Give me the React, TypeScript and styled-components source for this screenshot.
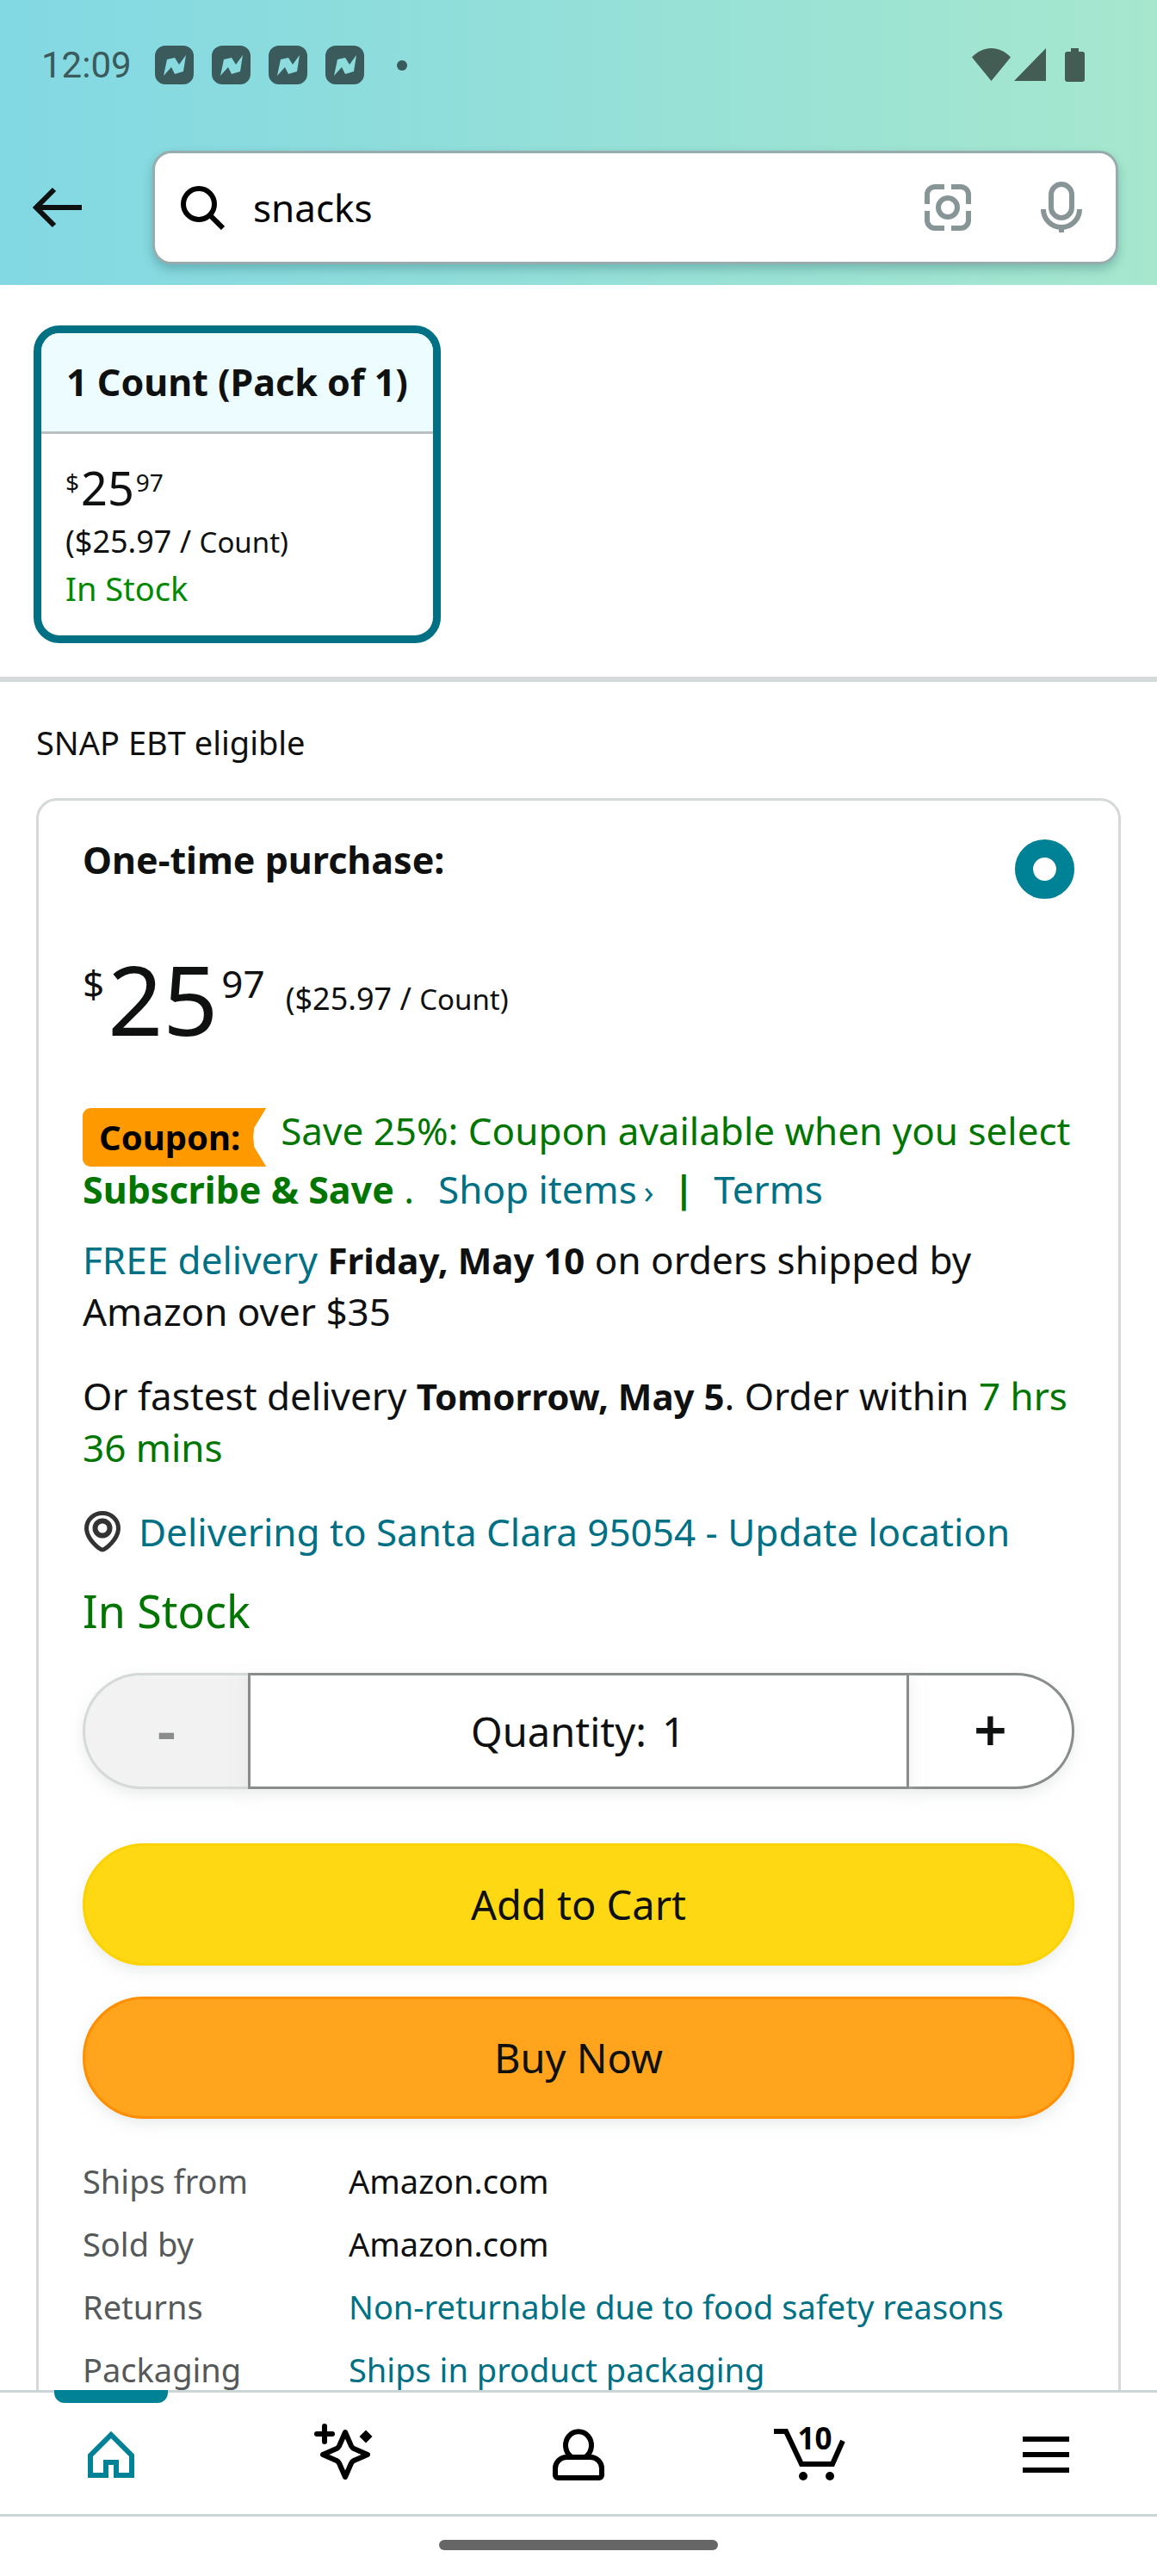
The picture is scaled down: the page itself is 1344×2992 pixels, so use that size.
import React, { useState } from 'react';
import styled, { createGlobalStyle, css } from 'styled-components';

const color = {
  ink: '#0f1111',
  muted: '#565959',
  link: '#007185',
  teal: '#008296',
  green: '#007600',
  line: '#d5d9d9',
  navLine: '#cbd5d7',
  iconGray: '#879596',
};

const GlobalStyle = createGlobalStyle`
  *, *::before, *::after { box-sizing: border-box; }
  body {
    margin: 0;
    background: #fff;
    color: ${color.ink};
    font-family: 'Noto Sans', 'Open Sans', sans-serif;
    font-size: 44px;
    line-height: 60px;
  }
  button, input { font: inherit; color: inherit; }
  p, h1, h2 { margin: 0; }
  svg { display: block; flex: none; }
`;

const Screen = styled.div`
  display: flex;
  flex-direction: column;
  height: 100vh;
`;

/* ---------- Header ---------- */

const Header = styled.header`
  flex: none;
  background: linear-gradient(to right, #82d8e3, #a6e7ce);
`;

const StatusBar = styled.div`
  display: flex;
  align-items: center;
  justify-content: space-between;
  height: 151px;
  padding: 0 84px 0 48px;
  color: #3a5a5b;
`;

const Clock = styled.time`
  margin-right: 6px;
  font-family: Roboto, sans-serif;
  font-size: 42px;
`;

const StatusGroup = styled.div`
  display: flex;
  align-items: center;
  gap: 21px;
`;

const Dot = styled.span`
  width: 12px;
  height: 12px;
  margin-left: 17px;
  border-radius: 50%;
  background: currentColor;
`;

const SearchRow = styled.form`
  display: flex;
  align-items: center;
  gap: 82px;
  padding: 24px 45px 24px 38px;
`;

const IconButton = styled.button`
  display: flex;
  padding: 0;
  border: 0;
  background: none;
`;

const SearchBox = styled.div`
  display: flex;
  flex: 1;
  align-items: center;
  min-width: 0;
  height: 132px;
  padding: 0 39px 0 30px;
  border: 3px solid #98acae;
  border-radius: 22px;
  background: #fff;
  box-shadow: 0 6px 12px rgba(0, 60, 70, 0.25);
`;

const SearchInput = styled.input`
  flex: 1;
  min-width: 0;
  padding: 0 33px;
  border: 0;
  outline: 0;
  background: none;
  color: #000;
`;

const SearchTools = styled.div`
  display: flex;
  align-items: center;
  gap: 81px;
`;

/* ---------- Content ---------- */

const Content = styled.main`
  flex: 1;
  min-height: 0;
  overflow-y: auto;
  scrollbar-width: none;
`;

const Options = styled.section`
  padding: 47px 39px 39px;
  border-bottom: 6px solid ${color.line};
`;

const OptionCard = styled.button`
  display: block;
  padding: 0;
  overflow: hidden;
  border: 9px solid ${color.link};
  border-radius: 30px;
  background: #fff;
  text-align: left;
`;

const OptionTitle = styled.span`
  display: block;
  padding: 27px 29px;
  border-bottom: 3px solid #babfbf;
  background: #edfcff;
  font-size: 43px;
  font-weight: 700;
  white-space: nowrap;
`;

const OptionBody = styled.span`
  display: flex;
  flex-direction: column;
  padding: 32px 28px 28px;
`;

const OptionStock = styled.span`
  color: #008a00;
  font-size: 38px;
  line-height: 54px;
`;

const PriceText = styled.span<{ $large?: boolean }>`
  display: flex;
  align-items: flex-start;
  ${(p) =>
    p.$large
      ? css`
          gap: 4px;
          font-size: 112px;
          line-height: 112px;
        `
      : css`
          gap: 2px;
          margin-bottom: 6px;
          font-size: 54px;
          line-height: 60px;
        `}
`;

const PriceSmall = styled.span<{ $large?: boolean }>`
  font-size: ${(p) => (p.$large ? 44 : 28)}px;
  line-height: ${(p) => (p.$large ? 76 : 48)}px;
`;

const UnitText = styled.span`
  font-size: 36px;
  line-height: 54px;
  white-space: nowrap;

  small {
    font-size: 33px;
    line-height: 44px;
  }
`;

const Offer = styled.section`
  padding: 43px 42px 60px;
`;

const Snap = styled.p`
  margin-bottom: 38px;
  font-size: 38px;
  line-height: 54px;
`;

const BuyBox = styled.div`
  padding: 39px 51px 48px;
  border: 3px solid ${color.line};
  border-radius: 24px;
`;

const PurchaseType = styled.label`
  display: flex;
  align-items: flex-start;
  justify-content: space-between;
  margin-bottom: 60px;
  font-size: 43px;
  font-weight: 700;
`;

const Radio = styled.input`
  appearance: none;
  width: 69px;
  height: 69px;
  margin: 6px 0 0;
  border: 21px solid ${color.teal};
  border-radius: 50%;
  background: #fff;
`;

const PriceRow = styled.div`
  display: flex;
  align-items: center;
  gap: 24px;
  margin-bottom: 63px;
`;

const Bold = styled.b`
  font-size: 43px;
  line-height: 44px;
`;

const Link = styled.a`
  color: ${color.link};
  text-decoration: none;
`;

const Green = styled.span`
  color: ${color.green};
`;

const Coupon = styled.p`
  margin-bottom: 18px;
  color: ${color.green};
  line-height: 68px;
`;

const CouponBadge = styled.span`
  float: left;
  height: 68px;
  margin: 8px 17px -8px 0;
  padding: 0 30px 0 19px;
  border-radius: 9px 0 0 9px;
  background: #ff9900;
  clip-path: polygon(0 0, 100% 0, calc(100% - 14px) 23px, calc(100% - 15px) 34px, calc(100% - 14px) 45px, 100% 100%, 0 100%);
  color: #000;
  font-size: 40px;
  font-weight: 700;
`;

const CouponLinks = styled.span`
  display: inline-flex;
  gap: 23px;
  margin-left: 28px;
  line-height: 60px;

  b { line-height: 60px; }
`;

const Chevron = styled.span`
  margin-left: 8px;
  font-size: 38px;
  line-height: 44px;
`;

const Delivery = styled.p`
  margin-bottom: 38px;

  b { font-size: 42px; }
`;

const Location = styled(Link)`
  display: flex;
  align-items: center;
  gap: 21px;
  margin-bottom: 27px;
  padding-left: 2px;
`;

const Stock = styled.p`
  margin-bottom: 37px;
  color: ${color.green};
  font-size: 52px;
  line-height: 70px;
`;

const softShadow = css`
  box-shadow: 0 6px 15px rgba(213, 217, 217, 0.5);
`;

const Stepper = styled.div`
  display: flex;
  height: 135px;
  margin-bottom: 63px;
`;

const StepButton = styled.button<{ $side: 'left' | 'right' }>`
  width: 192px;
  padding: 0 0 4px;
  border: 3px solid #888c8c;
  background: #fff;
  font-size: 68px;
  font-weight: 600;
  line-height: 64px;
  ${softShadow}
  ${(p) =>
    p.$side === 'left'
      ? css`
          border-right: 0;
          border-radius: 68px 0 0 68px;
        `
      : css`
          border-left: 0;
          border-radius: 0 68px 68px 0;
        `}

  &:disabled {
    border-color: ${color.line};
    background: #f2f2f2;
    color: #888c8c;
  }
`;

const Quantity = styled.label`
  position: relative;
  display: flex;
  flex: 1;
  align-items: center;
  justify-content: center;
  gap: 18px;
  border: 3px solid #888c8c;
  background: #fff;
  font-size: 47px;
  ${softShadow}
`;

const QuantityInput = styled.input`
  width: 28px;
  padding: 0;
  border: 0;
  outline: 0;
  background: none;
`;

const ActionButton = styled.button<{ $fill: string; $edge: string }>`
  display: block;
  width: 100%;
  height: 142px;
  margin-bottom: 36px;
  border: 3px solid ${(p) => p.$edge};
  border-radius: 72px;
  background: ${(p) => p.$fill};
  font-size: 47px;
  ${softShadow}
`;

const Facts = styled.table`
  width: 100%;
  border-collapse: collapse;
  font-size: 38px;
  line-height: 73px;
  text-align: left;

  th {
    width: 309px;
    padding: 0;
    color: ${color.muted};
    font-weight: 400;
  }
  td { padding: 0; }
`;

/* ---------- Bottom navigation ---------- */

const NavBar = styled.nav`
  display: flex;
  flex: none;
  justify-content: space-between;
  height: 147px;
  padding: 0 63px;
  border: solid ${color.navLine};
  border-width: 3px 0;
  background: #fff;
`;

const NavItem = styled.button<{ $active?: boolean }>`
  position: relative;
  display: flex;
  align-items: center;
  justify-content: center;
  width: 132px;
  padding: 3px 0 0;
  border: 0;
  background: none;
  color: ${(p) => (p.$active ? color.teal : '#000')};

  ${(p) =>
    p.$active &&
    css`
      &::before {
        content: '';
        position: absolute;
        top: -3px;
        left: 0;
        width: 100%;
        height: 15px;
        border-radius: 0 0 12px 12px;
        background: ${color.teal};
      }
    `}
`;

const CartFrame = styled.span`
  position: relative;
`;

const CartCount = styled.span`
  position: absolute;
  top: -10px;
  left: 28px;
  font-size: 35px;
  font-weight: 700;
  line-height: 44px;
`;

const GestureArea = styled.div`
  display: flex;
  flex: none;
  justify-content: center;
  height: 69px;
  padding-top: 27px;
  background: #fff;
`;

const GestureBar = styled.div`
  width: 324px;
  height: 12px;
  border-radius: 6px;
  background: #666;
`;

/* ---------- Icons ---------- */

const NewsIcon = () => (
  <svg width="45" height="45" viewBox="0 0 45 45" aria-hidden="true">
    <path
      fillRule="evenodd"
      fill="#3a5a5b"
      d="M12 0H33A12 12 0 0 1 45 12V33A12 12 0 0 1 33 45H12A12 12 0 0 1 0 33V12A12 12 0 0 1 12 0ZM10 35L19 25L23 33L33 30L36 11L28 22L23 14L14 16Z"
    />
  </svg>
);

const SignalIcons = () => (
  <svg width="131" height="40" viewBox="0 0 131 40" fill="#435c54" aria-hidden="true">
    <path d="M0 10.500C13-3.500 32-3.500 45 10.500L22.500 38Z" />
    <path d="M49 38L86 0V38Z" />
    <path d="M115 0H124V4H128A3 3 0 0 1 131 7V36A3 3 0 0 1 128 39H111A3 3 0 0 1 108 36V7A3 3 0 0 1 111 4H115Z" />
  </svg>
);

const BackIcon = () => (
  <svg width="57" height="48" viewBox="0 0 57 48" fill="none" stroke="#0f1111" strokeWidth="6" aria-hidden="true">
    <path d="M57 24H5M25 3L4 24L25 45" />
  </svg>
);

const SearchIcon = () => (
  <svg width="51" height="51" viewBox="0 0 51 51" fill="none" stroke="#000" strokeWidth="6" aria-hidden="true">
    <circle cx="21" cy="21" r="18" />
    <path d="M33 33L49 49" />
  </svg>
);

const LensIcon = () => (
  <svg width="54" height="54" viewBox="0 0 54 54" fill="none" stroke={color.iconGray} strokeWidth="6" aria-hidden="true">
    <path d="M3 23V12A9 9 0 0 1 12 3H23M31 3H42A9 9 0 0 1 51 12V23M51 31V42A9 9 0 0 1 42 51H31M23 51H12A9 9 0 0 1 3 42V31" />
    <circle cx="27" cy="27" r="11" />
  </svg>
);

const MicIcon = () => (
  <svg width="48" height="60" viewBox="0 0 48 60" fill="none" stroke={color.iconGray} strokeWidth="6" aria-hidden="true">
    <rect x="12" y="3" width="24" height="39" rx="12" />
    <path d="M3 32A21 21 0 0 0 45 32M24 52V59" />
  </svg>
);

const PinIcon = () => (
  <svg width="42" height="48" viewBox="0 0 42 48" fill="none" stroke="#333" strokeWidth="5" aria-hidden="true">
    <path d="M21 45C18 45 2.500 33 2.500 20A18.500 17.500 0 0 1 39.500 20C39.500 33 24 45 21 45Z" />
    <circle cx="21" cy="20" r="8.500" strokeWidth="6" />
  </svg>
);

const HomeIcon = () => (
  <svg width="54" height="54" viewBox="0 0 54 54" fill="none" stroke="currentColor" strokeWidth="6" aria-hidden="true">
    <path d="M3 51V28L27 4L51 28V51H33V36H21V51Z" />
  </svg>
);

const SparkleIcon = () => (
  <svg width="72" height="72" viewBox="0 0 72 72" fill="none" stroke="currentColor" strokeWidth="6" strokeLinecap="round" strokeLinejoin="round" aria-hidden="true">
    <path d="M12 3V21M3 12H21" />
    <path d="M36 10L43 26Q44 28 46 29L62 36L46 43Q44 44 43 46L36 62L29 46Q28 44 26 43L10 36L26 29Q28 28 29 26Z" />
    <path d="M60 7.500L67.500 15L60 22.500L52.500 15Z" fill="currentColor" stroke="none" />
  </svg>
);

const PersonIcon = () => (
  <svg width="60" height="60" viewBox="0 0 60 60" fill="none" stroke="currentColor" strokeWidth="6" aria-hidden="true">
    <path d="M21 32A15 16 0 1 1 39 32" />
    <path d="M3 54V46A13 13 0 0 1 16 33H44A13 13 0 0 1 57 46V54A3 3 0 0 1 54 57H6A3 3 0 0 1 3 54Z" />
  </svg>
);

const CartIcon = () => (
  <svg width="90" height="62" viewBox="0 0 90 62" aria-hidden="true">
    <path d="M0 4H14L32 42H68L80 15" fill="none" stroke="currentColor" strokeWidth="6" />
    <circle cx="34" cy="56" r="5" fill="currentColor" />
    <circle cx="65" cy="56" r="5" fill="currentColor" />
  </svg>
);

const MenuIcon = () => (
  <svg width="54" height="42" viewBox="0 0 54 42" stroke="currentColor" strokeWidth="6" aria-hidden="true">
    <path d="M0 3H54M0 21H54M0 39H54" />
  </svg>
);

/* ---------- Parts ---------- */

const Price = ({ large }: { large?: boolean }) => (
  <PriceText $large={large}>
    <PriceSmall $large={large}>$</PriceSmall>
    <span>25</span>
    <PriceSmall $large={large}>97</PriceSmall>
  </PriceText>
);

const UnitPrice = () => (
  <UnitText>
    ($25.97 / <small>Count)</small>
  </UnitText>
);

const facts = [
  { label: 'Ships from', value: 'Amazon.com' },
  { label: 'Sold by', value: 'Amazon.com' },
  { label: 'Returns', value: 'Non-returnable due to food safety reasons', link: true },
  { label: 'Packaging', value: 'Ships in product packaging', link: true },
];

export default function App() {
  const [quantity, setQuantity] = useState(1);

  return (
    <Screen>
      <GlobalStyle />
      <Header>
        <StatusBar>
          <StatusGroup>
            <Clock>12:09</Clock>
            <NewsIcon />
            <NewsIcon />
            <NewsIcon />
            <NewsIcon />
            <Dot />
          </StatusGroup>
          <SignalIcons />
        </StatusBar>
        <SearchRow onSubmit={(e) => e.preventDefault()}>
          <IconButton type="button" aria-label="Back">
            <BackIcon />
          </IconButton>
          <SearchBox>
            <SearchIcon />
            <SearchInput aria-label="Search" defaultValue="snacks" />
            <SearchTools>
              <IconButton type="button" aria-label="Search by image">
                <LensIcon />
              </IconButton>
              <IconButton type="button" aria-label="Search by voice">
                <MicIcon />
              </IconButton>
            </SearchTools>
          </SearchBox>
        </SearchRow>
      </Header>

      <Content>
        <Options>
          <OptionCard type="button" aria-pressed="true">
            <OptionTitle>1 Count (Pack of 1)</OptionTitle>
            <OptionBody>
              <Price />
              <UnitPrice />
              <OptionStock>In Stock</OptionStock>
            </OptionBody>
          </OptionCard>
        </Options>

        <Offer>
          <Snap>SNAP EBT eligible</Snap>
          <BuyBox>
            <PurchaseType>
              One-time purchase:
              <Radio type="radio" name="purchase" defaultChecked />
            </PurchaseType>
            <PriceRow>
              <Price large />
              <UnitPrice />
            </PriceRow>
            <Coupon>
              <CouponBadge>Coupon:</CouponBadge>
              Save 25%: Coupon available when you select <Bold>Subscribe &amp; Save</Bold> .
              <CouponLinks>
                <Link href="#items">
                  Shop items<Chevron>›</Chevron>
                </Link>
                <Bold>|</Bold>
                <Link href="#terms">Terms</Link>
              </CouponLinks>
            </Coupon>
            <Delivery>
              <Link href="#delivery">FREE delivery</Link> <Bold>Friday, May 10</Bold> on orders shipped by Amazon over
              $35
            </Delivery>
            <Delivery>
              Or fastest delivery <Bold>Tomorrow, May 5</Bold>. Order within <Green>7 hrs 36 mins</Green>
            </Delivery>
            <Location href="#location">
              <PinIcon />
              Delivering to Santa Clara 95054 - Update location
            </Location>
            <Stock>In Stock</Stock>
            <Stepper>
              <StepButton
                $side="left"
                type="button"
                aria-label="Decrease quantity"
                disabled={quantity === 1}
                onClick={() => setQuantity(quantity - 1)}
              >
                -
              </StepButton>
              <Quantity>
                Quantity:
                <QuantityInput readOnly value={quantity} />
              </Quantity>
              <StepButton
                $side="right"
                type="button"
                aria-label="Increase quantity"
                onClick={() => setQuantity(quantity + 1)}
              >
                +
              </StepButton>
            </Stepper>
            <ActionButton type="button" $fill="#ffd814" $edge="#fcd200">
              Add to Cart
            </ActionButton>
            <ActionButton type="button" $fill="#ffa41c" $edge="#ff8f00">
              Buy Now
            </ActionButton>
            <Facts>
              <tbody>
                {facts.map((fact) => (
                  <tr key={fact.label}>
                    <th scope="row">{fact.label}</th>
                    <td>{fact.link ? <Link href="#details">{fact.value}</Link> : fact.value}</td>
                  </tr>
                ))}
              </tbody>
            </Facts>
          </BuyBox>
        </Offer>
      </Content>

      <NavBar aria-label="Main">
        <NavItem type="button" $active aria-label="Home">
          <HomeIcon />
        </NavItem>
        <NavItem type="button" aria-label="Discover">
          <SparkleIcon />
        </NavItem>
        <NavItem type="button" aria-label="Account">
          <PersonIcon />
        </NavItem>
        <NavItem type="button" aria-label="Cart">
          <CartFrame>
            <CartIcon />
            <CartCount>10</CartCount>
          </CartFrame>
        </NavItem>
        <NavItem type="button" aria-label="Menu">
          <MenuIcon />
        </NavItem>
      </NavBar>
      <GestureArea>
        <GestureBar />
      </GestureArea>
    </Screen>
  );
}
